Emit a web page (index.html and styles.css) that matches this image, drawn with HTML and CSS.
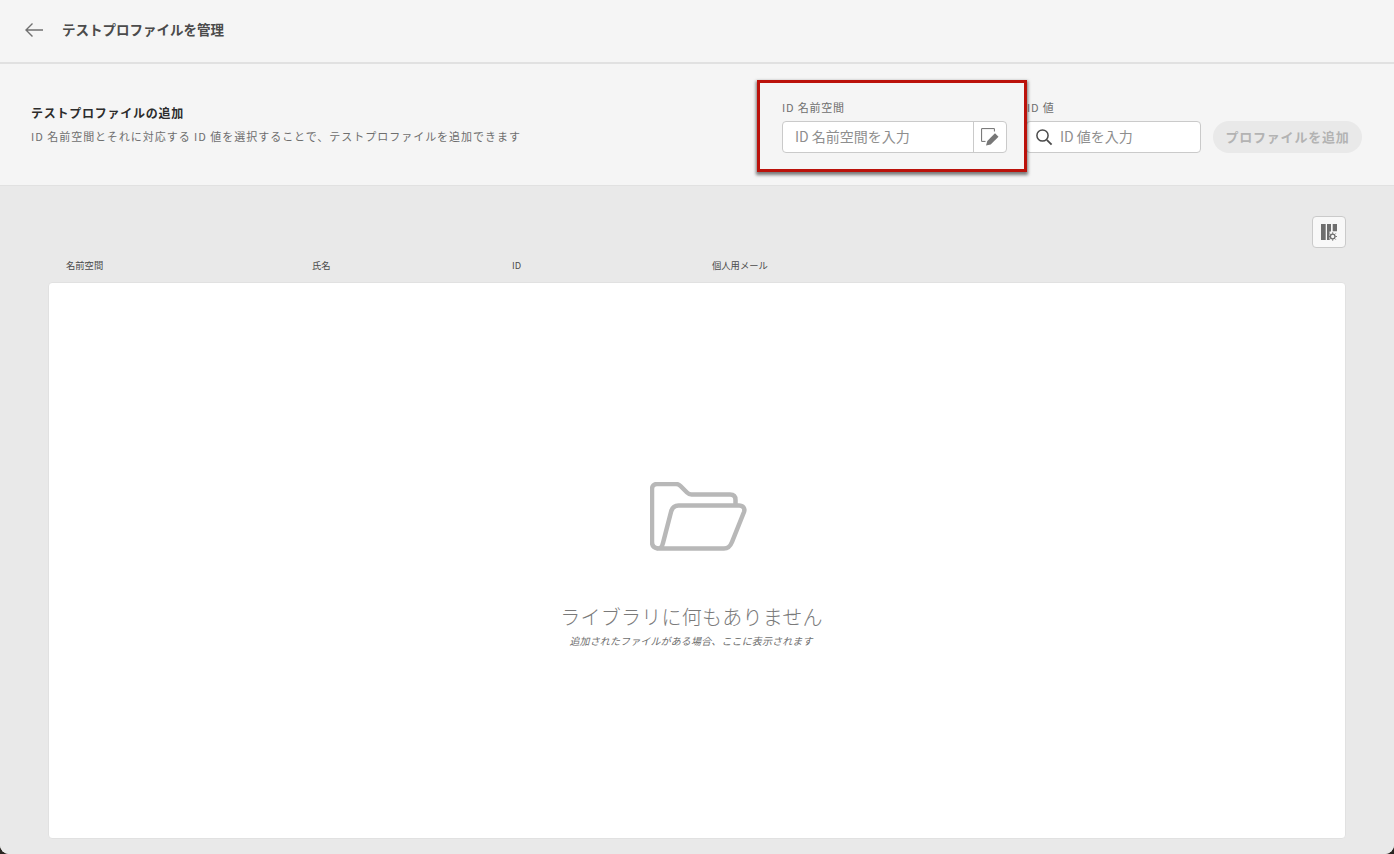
FILE: index.html
```html
<!DOCTYPE html>
<html lang="ja">
<head>
  <title>テストプロファイルを管理</title>
  <link rel="stylesheet" href="styles.css">
</head>
<body>
  <div class="app">
    <header class="topbar">
      <svg class="back-icon" width="20" height="16" viewBox="0 0 20 16"><path d="M19 8H2M8.5 1.5L2 8l6.5 6.5" fill="none" stroke="#707070" stroke-width="1.4"/></svg>
      <h1 class="page-title">テストプロファイルを管理</h1>
    </header>

    <section class="add-bar">
      <div class="add-info">
        <h2 class="add-title">テストプロファイルの追加</h2>
        <p class="add-desc">ID 名前空間とそれに対応する ID 値を選択することで、テストプロファイルを追加できます</p>
      </div>
      <div class="add-form">
        <div class="field field-ns">
          <label class="field-label">ID 名前空間</label>
          <div class="input-group">
            <span class="input-text">ID 名前空間を入力</span>
            <span class="input-btn">
              <svg width="18" height="18" viewBox="0 0 18 18">
                <path d="M4.500 13.400H0.600V0.600H13.400V3.500" fill="none" stroke="#6e6e6e" stroke-width="1"/>
                <path d="M5 17.500l1.300-4.500 7.700-7.800 3.500 3.500-7.800 7.700z" fill="#777"/>
              </svg>
            </span>
          </div>
        </div>
        <div class="field field-id">
          <label class="field-label">ID 値</label>
          <div class="input-group">
            <svg class="search-icon" width="18" height="18" viewBox="0 0 18 18">
              <circle cx="7.500" cy="7.500" r="5.600" fill="none" stroke="#4b4b4b" stroke-width="1.500"/>
              <path d="M11.800 11.800l4.800 4.800" stroke="#4b4b4b" stroke-width="1.800"/>
            </svg>
            <span class="input-text input-text-id">ID 値を入力</span>
          </div>
        </div>
        <button class="add-btn">プロファイルを追加</button>
      </div>
      <div class="callout"></div>
    </section>

    <main class="content">
      <div class="tools">
        <button class="col-btn">
          <svg width="18" height="18" viewBox="0 0 18 18">
            <path d="M1 1h4.700v16H1zM7 1h4v7.500H9.500V17H7zM12.700 1H17v7.300h-4.300z" fill="#6e6e6e"/>
            <circle cx="12.700" cy="13.500" r="2.300" fill="none" stroke="#6e6e6e" stroke-width="1.300"/>
            <path d="M12.700 9.300v1.500M12.700 16.200v1.500M8.500 13.500H10M15.400 13.500h1.500M9.700 10.500l1.100 1.100M14.600 15.400l1.100 1.100M15.700 10.500l-1.100 1.100M10.800 15.400l-1.100 1.100" stroke="#6e6e6e" stroke-width="1"/>
          </svg>
        </button>
      </div>
      <div class="table-head">
        <span class="col col-ns">名前空間</span>
        <span class="col col-name">氏名</span>
        <span class="col col-id">ID</span>
        <span class="col">個人用メール</span>
      </div>
      <div class="table-card">
        <svg class="folder" width="98" height="70" viewBox="0 0 98 70">
          <path d="M8 66.500C3.500 66 2 63.500 2 60V7C2 4 4 2 7 2H26C28 2 29 2.500 30.500 4L37 10.500C38.500 12 39.500 12.500 41.500 12.500H80C83.500 12.500 85.500 14.500 85.500 18V23" fill="none" stroke="#b8b8b8" stroke-width="4.500"/>
          <path d="M8 66.500C11 66.500 12 65 13 61L21 30C22 26 24.500 23.500 28.500 23.500H89C93 23.500 95.300 26.500 94 30L82 60C80 65 78 66.500 74 66.500Z" fill="none" stroke="#b8b8b8" stroke-width="4.500" stroke-linejoin="round"/>
        </svg>
        <p class="empty-title">ライブラリに何もありません</p>
        <p class="empty-sub">追加されたファイルがある場合、ここに表示されます</p>
      </div>
    </main>
  </div>
</body>
</html>
```

FILE: styles.css
```css
html, body {
  margin: 0;
  height: 100%;
}

body {
  background-color: #2a2622;
  font-family: "Noto Sans CJK JP", "Noto Sans", sans-serif;
  overflow: hidden;
}

.app {
  height: 854px;
  display: flex;
  flex-direction: column;
  background-color: #f5f5f5;
  border-radius: 0 0 9px 9px;
  overflow: hidden;
}

.topbar {
  height: 60px;
  flex: none;
  display: flex;
  align-items: center;
  padding: 0 0 2px 24px;
  border-bottom: 2px solid #e1e1e1;
}

.back-icon {
  margin-right: 18px;
}

.page-title {
  margin: 0 0 2px;
  font-size: 13.500px;
  font-weight: 700;
  line-height: 20px;
  color: #4b4b4b;
}

.add-bar {
  height: 121px;
  flex: none;
  display: flex;
  justify-content: space-between;
  align-items: center;
  padding: 0 32px 0 31px;
  border-bottom: 1px solid #e1e1e1;
  position: relative;
}

.add-info {
  margin-bottom: 2px;
}

.add-title {
  margin: 0 0 5px;
  font-size: 12px;
  font-weight: 700;
  line-height: 20px;
  letter-spacing: 0.750px;
  color: #2c2c2c;
}

.add-desc {
  margin: 0;
  font-size: 11px;
  line-height: 16px;
  letter-spacing: 0.980px;
  color: #6e6e6e;
}

.add-form {
  display: flex;
  align-items: flex-end;
  margin-top: 3px;
}

.field-ns {
  width: 225px;
  margin-right: 19px;
}

.field-id {
  width: 175px;
  margin-right: 12px;
}

.field-label {
  display: block;
  font-size: 11px;
  line-height: 16px;
  letter-spacing: 0.800px;
  margin-bottom: 6px;
  color: #6e6e6e;
}

.field-id .field-label {
  padding-left: 1px;
}

.input-group {
  height: 32px;
  box-sizing: border-box;
  display: flex;
  align-items: center;
  background-color: #fff;
  border: 1px solid #cacaca;
  border-radius: 4px;
}

.input-text {
  flex: 1;
  padding: 0 0 2px 12px;
  font-size: 14px;
  color: #8e8e8e;
}

.input-text-id {
  padding-left: 7px;
}

.input-btn {
  width: 33px;
  height: 100%;
  box-sizing: border-box;
  display: flex;
  align-items: center;
  justify-content: center;
  border-left: 1px solid #cacaca;
}

.search-icon {
  margin-left: 8px;
}

.add-btn {
  width: 149px;
  height: 32px;
  padding: 0 0 2px;
  border: none;
  border-radius: 16px;
  background-color: #e9e9e9;
  color: #b3b3b3;
  font-family: inherit;
  font-size: 13px;
  font-weight: 700;
  letter-spacing: 0.800px;
}

.callout {
  position: absolute;
  left: 757px;
  top: 16px;
  width: 264px;
  height: 86px;
  border: 3px solid #bb120b;
  box-shadow: 0 2px 3px 1px rgba(0, 0, 0, 0.5);
}

.content {
  flex: 1;
  min-height: 0;
  display: flex;
  flex-direction: column;
  padding: 30px 48px 15px;
  background-color: #e9e9e9;
}

.tools {
  display: flex;
  justify-content: flex-end;
}

.col-btn {
  width: 34px;
  height: 32px;
  padding: 0;
  display: flex;
  align-items: center;
  justify-content: center;
  background-color: #f8f8f8;
  border: 1px solid #cacaca;
  border-radius: 4px;
}

.table-head {
  display: flex;
  height: 33px;
  margin-bottom: 1px;
  flex: none;
  align-items: center;
  padding-left: 18px;
  font-size: 9.300px;
  color: #4b4b4b;
}

.col-ns {
  width: 246px;
}

.col-name,
.col-id {
  width: 200px;
}

.table-card {
  flex: 1;
  min-height: 0;
  display: flex;
  flex-direction: column;
  align-items: center;
  background-color: #fff;
  border: 1px solid #e1e1e1;
  border-radius: 4px;
  padding-top: 199px;
}

.folder {
  margin-left: 3px;
}

.empty-title {
  margin: 51px 11px 0 0;
  font-size: 20px;
  line-height: 28px;
  font-weight: 300;
  letter-spacing: 0.250px;
  color: #7a7a7a;
}

.empty-sub {
  margin: 3px 12px 0 0;
  font-size: 10px;
  line-height: 14px;
  letter-spacing: 0.130px;
  font-style: italic;
  color: #6e6e6e;
}
```
